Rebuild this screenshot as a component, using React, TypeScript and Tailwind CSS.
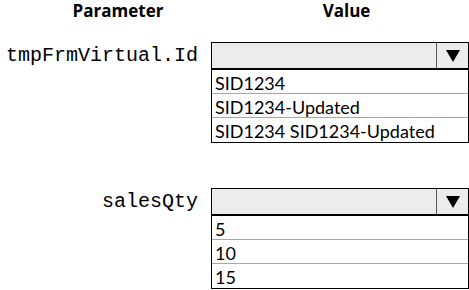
import React from "react";

function Dropdown({ items }: { items: string[] }) {
  return (
    <div className="w-[258px] border border-black bg-white">
      <div className="flex h-[27px] border-b-2 border-black bg-[#ececec]">
        <div className="flex-1" />
        <div className="flex w-[32px] items-center justify-center border-l border-[#555]">
          <svg width="14" height="12" viewBox="0 0 14 12">
            <polygon points="0,0 14,0 7,12" fill="#000" />
          </svg>
        </div>
      </div>
      {items.map((it, i) => (
        <div
          key={i}
          className={
            "flex h-[24px] items-center pl-[3px] pt-[2px] text-[18px] leading-none text-black " +
            (i < items.length - 1 ? "border-b border-[#a6a6a6]" : "")
          }
          style={{ fontFamily: "Lato, 'Open Sans', sans-serif" }}
        >
          {it}
        </div>
      ))}
    </div>
  );
}

export default function App() {
  return (
    <div className="h-[290px] w-[469px] bg-white">
      <div
        className="flex h-[20px] items-center pt-[1px] font-bold text-[17px] leading-none text-black"
        style={{ fontFamily: "'Open Sans', 'Liberation Sans', sans-serif" }}
      >
        <div className="w-[236px] text-center">Parameter</div>
        <div className="w-[221px] text-center">Value</div>
      </div>
      <div className="mt-[22px] flex items-start">
        <div
          className="flex h-[27px] w-[211px] items-center justify-end pr-[13px] text-[20px] text-black"
          style={{ fontFamily: "'Liberation Mono', monospace" }}
        >
          tmpFrmVirtual.Id
        </div>
        <Dropdown items={["SID1234", "SID1234-Updated", "SID1234 SID1234-Updated"]} />
      </div>
      <div className="mt-[45px] flex items-start">
        <div
          className="flex h-[27px] w-[211px] items-center justify-end pr-[13px] text-[20px] text-black"
          style={{ fontFamily: "'Liberation Mono', monospace" }}
        >
          salesQty
        </div>
        <Dropdown items={["5", "10", "15"]} />
      </div>
    </div>
  );
}
